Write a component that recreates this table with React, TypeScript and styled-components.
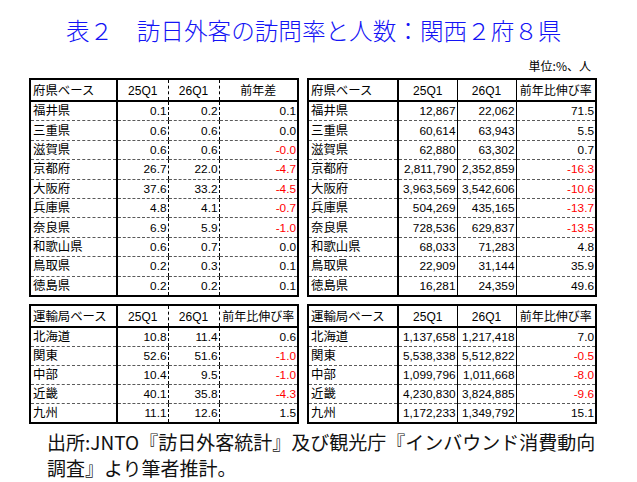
import styled, { createGlobalStyle } from "styled-components";

const GlobalStyle = createGlobalStyle`
    html, body {
        margin: 0;
        padding: 0;
        background: #ffffff;
    }
    body {
        font-family: "Liberation Sans", "Noto Sans CJK JP", sans-serif;
        color: #000000;
    }
`;

type Row = [string, string, string, string];

const prefRate: Row[] = [
    ["福井県", "0.1", "0.2", "0.1"],
    ["三重県", "0.6", "0.6", "0.0"],
    ["滋賀県", "0.6", "0.6", "-0.0"],
    ["京都府", "26.7", "22.0", "-4.7"],
    ["大阪府", "37.6", "33.2", "-4.5"],
    ["兵庫県", "4.8", "4.1", "-0.7"],
    ["奈良県", "6.9", "5.9", "-1.0"],
    ["和歌山県", "0.6", "0.7", "0.0"],
    ["鳥取県", "0.2", "0.3", "0.1"],
    ["徳島県", "0.2", "0.2", "0.1"],
];

const prefCount: Row[] = [
    ["福井県", "12,867", "22,062", "71.5"],
    ["三重県", "60,614", "63,943", "5.5"],
    ["滋賀県", "62,880", "63,302", "0.7"],
    ["京都府", "2,811,790", "2,352,859", "-16.3"],
    ["大阪府", "3,963,569", "3,542,606", "-10.6"],
    ["兵庫県", "504,269", "435,165", "-13.7"],
    ["奈良県", "728,536", "629,837", "-13.5"],
    ["和歌山県", "68,033", "71,283", "4.8"],
    ["鳥取県", "22,909", "31,144", "35.9"],
    ["徳島県", "16,281", "24,359", "49.6"],
];

const bureauRate: Row[] = [
    ["北海道", "10.8", "11.4", "0.6"],
    ["関東", "52.6", "51.6", "-1.0"],
    ["中部", "10.4", "9.5", "-1.0"],
    ["近畿", "40.1", "35.8", "-4.3"],
    ["九州", "11.1", "12.6", "1.5"],
];

const bureauCount: Row[] = [
    ["北海道", "1,137,658", "1,217,418", "7.0"],
    ["関東", "5,538,338", "5,512,822", "-0.5"],
    ["中部", "1,099,796", "1,011,668", "-8.0"],
    ["近畿", "4,230,830", "3,824,885", "-9.6"],
    ["九州", "1,172,233", "1,349,792", "15.1"],
];

const Page = styled.div`
    width: 637px;
`;

const Title = styled.h1`
    margin: 0;
    padding: 15px 0 0 66px;
    font-family: "Noto Sans CJK JP", sans-serif;
    font-weight: 300;
    font-size: 23.6px;
    line-height: 30px;
    color: #1414f5;
    white-space: nowrap;
`;

const Unit = styled.div`
    margin-top: 13px;
    padding-right: 46px;
    text-align: right;
    font-family: "Noto Sans CJK JP", sans-serif;
    font-size: 12px;
    line-height: 16px;
`;

const Grid = styled.div`
    margin-top: 4px;
    padding-left: 29px;
    display: grid;
    grid-template-columns: 268px 288px;
    column-gap: 10px;
    row-gap: 7px;
`;

const Table = styled.table<{ $label: number; $num: number; $last: number }>`
    border-collapse: collapse;
    table-layout: fixed;
    width: 100%;
    border: 2px solid #000;

    col:nth-child(1) { width: ${({ $label }) => $label}px; }
    col:nth-child(2), col:nth-child(3) { width: ${({ $num }) => $num}px; }
    col:nth-child(4) { width: ${({ $last }) => $last}px; }
`;

const Cell = styled.td<{ $solid?: boolean; $rowH: number }>`
    height: ${({ $rowH }) => $rowH}px;
    padding: 0 1px 0 1px;
    font-size: 11.8px;
    line-height: 14px;
    white-space: nowrap;
    overflow: hidden;
    border-bottom: 1px dashed #5a5a5a;
    border-left: 1px ${({ $solid }) => ($solid ? "solid" : "dashed")} #000;
    vertical-align: middle;

    &:first-child {
        border-left: none;
        border-right: 2px solid #000;
        padding-left: 2px;
        font-size: 12.4px;
    }
`;

const HeadCell = styled(Cell).attrs({ as: "th" })`
    font-weight: 400;
    text-align: center;
    padding-top: 2px;
    border-bottom: 2px solid #000;
    font-size: 12px;

    &:first-child {
        text-align: left;
        font-size: 12.4px;
    }
`;

const LabelCell = styled(Cell)`
    text-align: left;
`;

const NumCell = styled(Cell)<{ $neg?: boolean }>`
    text-align: right;
    color: ${({ $neg }) => ($neg ? "#ff0000" : "#000")};
`;

const Caption = styled.p`
    margin: 5px 0 0 47px;
    width: 555px;
    font-family: "Noto Sans CJK JP", sans-serif;
    font-size: 19px;
    line-height: 26.5px;
    color: #111;
`;

type DataTableProps = {
    head: Row;
    rows: Row[];
    widths: [number, number, number];
    solid?: boolean;
    headH: number;
    rowH: number;
};

const DataTable = ({ head, rows, widths, solid, headH, rowH }: DataTableProps) => (
    <Table $label={widths[0]} $num={widths[1]} $last={widths[2]}>
        <colgroup>
            <col />
            <col />
            <col />
            <col />
        </colgroup>
        <thead>
            <tr>
                {head.map((h) => (
                    <HeadCell key={h} $solid={solid} $rowH={headH}>
                        {h}
                    </HeadCell>
                ))}
            </tr>
        </thead>
        <tbody>
            {rows.map(([name, a, b, c]) => (
                <tr key={name}>
                    <LabelCell $rowH={rowH}>{name}</LabelCell>
                    <NumCell $solid={solid} $rowH={rowH}>{a}</NumCell>
                    <NumCell $solid={solid} $rowH={rowH}>{b}</NumCell>
                    <NumCell $solid={solid} $rowH={rowH} $neg={c.startsWith("-")}>
                        {c}
                    </NumCell>
                </tr>
            ))}
        </tbody>
    </Table>
);

const App = () => {
    return (
        <Page>
            <GlobalStyle />
            <Title>表２　訪日外客の訪問率と人数：関西２府８県</Title>
            <Unit>単位:%、人</Unit>
            <Grid>
                <DataTable
                    head={["府県ベース", "25Q1", "26Q1", "前年差"]}
                    rows={prefRate}
                    widths={[87, 51, 79]}
                    headH={18}
                    rowH={18.4}
                />
                <DataTable
                    head={["府県ベース", "25Q1", "26Q1", "前年比伸び率"]}
                    rows={prefCount}
                    widths={[90, 59, 80]}
                    solid
                    headH={18}
                    rowH={18.4}
                />
                <DataTable
                    head={["運輸局ベース", "25Q1", "26Q1", "前年比伸び率"]}
                    rows={bureauRate}
                    widths={[87, 51, 79]}
                    headH={18}
                    rowH={18}
                />
                <DataTable
                    head={["運輸局ベース", "25Q1", "26Q1", "前年比伸び率"]}
                    rows={bureauCount}
                    widths={[90, 59, 80]}
                    solid
                    headH={18}
                    rowH={18}
                />
            </Grid>
            <Caption>
                出所:JNTO『訪日外客統計』及び観光庁『インバウンド消費動向調査』より筆者推計。
            </Caption>
        </Page>
    );
};

export default App;
